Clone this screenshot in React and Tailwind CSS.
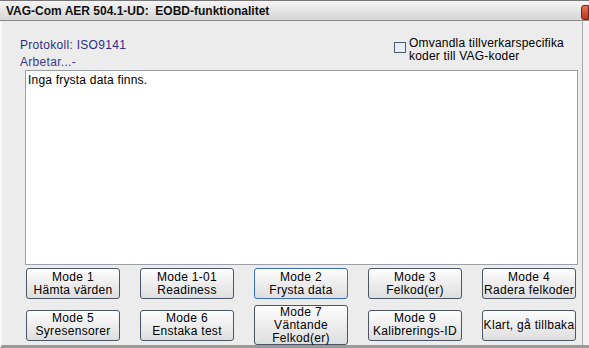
import React from 'react';

const font = { fontFamily: '"Liberation Sans", Arial, sans-serif' };

function ModeButton({ lines, focused, tall }) {
  return (
    <button
      className={`w-[94px] ${tall ? 'h-[40px]' : 'h-[31px]'} rounded-[3px] border ${
        focused ? 'border-[#3b6fc4]' : 'border-[#4a5566]'
      } bg-gradient-to-b from-[#fdfdfd] to-[#dedede] flex flex-col items-center justify-center text-[12px] leading-[13px] text-black tracking-[0.3px]`}
    >
      {lines.map(l => (
        <span key={l}>{l}</span>
      ))}
    </button>
  );
}

export default function App() {
  return (
    <div className="w-[589px] h-[348px] overflow-hidden bg-[#ececec] flex flex-col" style={font}>
      {/* Title bar */}
      <div className="h-[21px] shrink-0 border-t border-[#777] border-b border-b-[#8a8a8a] bg-gradient-to-b from-[#f4f4f4] to-[#d6d6d6] flex items-center justify-between">
        <span className="pl-[6px] text-[12px] font-bold text-[#111]">
          VAG-Com AER 504.1-UD:&nbsp;&nbsp;EOBD-funktionalitet
        </span>
        <div className="w-[8px] h-[15px] mt-[4px] rounded-l-[3px] bg-gradient-to-b from-[#e7725a] to-[#b8321c] border border-[#7a2010]" />
      </div>

      {/* Window body */}
      <div className="flex-1 flex border-l-2 border-l-[#f8f8f8] border-b-[3px] border-b-[#9a9a9a]">
        <div className="w-[581px] border-r border-[#a8a8a8] flex flex-col">
          {/* Header */}
          <div className="h-[49px] flex justify-between pl-[18px] pr-[8px] pt-[16px]">
            <div className="flex flex-col text-[12px] leading-[17px] text-[#2e2e88] tracking-[0.3px]">
              <span>Protokoll: ISO9141</span>
              <span className="text-[#3a3a90]">Arbetar...-</span>
            </div>
            <div className="flex items-start gap-[3px] w-[180px]">
              <div className="w-[12px] h-[11px] mt-[5px] border border-[#4b5b73] bg-[#e6eef8]" />
              <span className="text-[12px] leading-[13px] text-black tracking-[0.2px]">
                Omvandla tillverkarspecifika
                <br />
                koder till VAG-koder
              </span>
            </div>
          </div>

          {/* Text area */}
          <div className="ml-[23px] w-[553px] h-[195px] bg-white border border-[#9aa0a8] px-[2px] pt-[2px] text-[12px] leading-[14px] text-black tracking-[0.2px]">
            Inga frysta data finns.
          </div>

          {/* Buttons */}
          <div className="grid grid-cols-5 gap-x-[20px] pl-[24px] pt-[3px] w-fit">
            <ModeButton lines={['Mode 1', 'Hämta värden']} />
            <ModeButton lines={['Mode 1-01', 'Readiness']} />
            <ModeButton lines={['Mode 2', 'Frysta data']} focused />
            <ModeButton lines={['Mode 3', 'Felkod(er)']} />
            <ModeButton lines={['Mode 4', 'Radera felkoder']} />
          </div>
          <div className="grid grid-cols-5 gap-x-[20px] pl-[24px] pt-[6px] w-fit items-center">
            <div className="h-[40px] flex items-center"><ModeButton lines={['Mode 5', 'Syresensorer']} /></div>
            <ModeButton lines={['Mode 6', 'Enstaka test']} />
            <ModeButton lines={['Mode 7', 'Väntande', 'Felkod(er)']} tall />
            <ModeButton lines={['Mode 9', 'Kalibrerings-ID']} />
            <ModeButton lines={['Klart, gå tillbaka']} />
          </div>
        </div>
        <div className="flex-1 bg-[#f2f2f2]" />
      </div>
    </div>
  );
}
